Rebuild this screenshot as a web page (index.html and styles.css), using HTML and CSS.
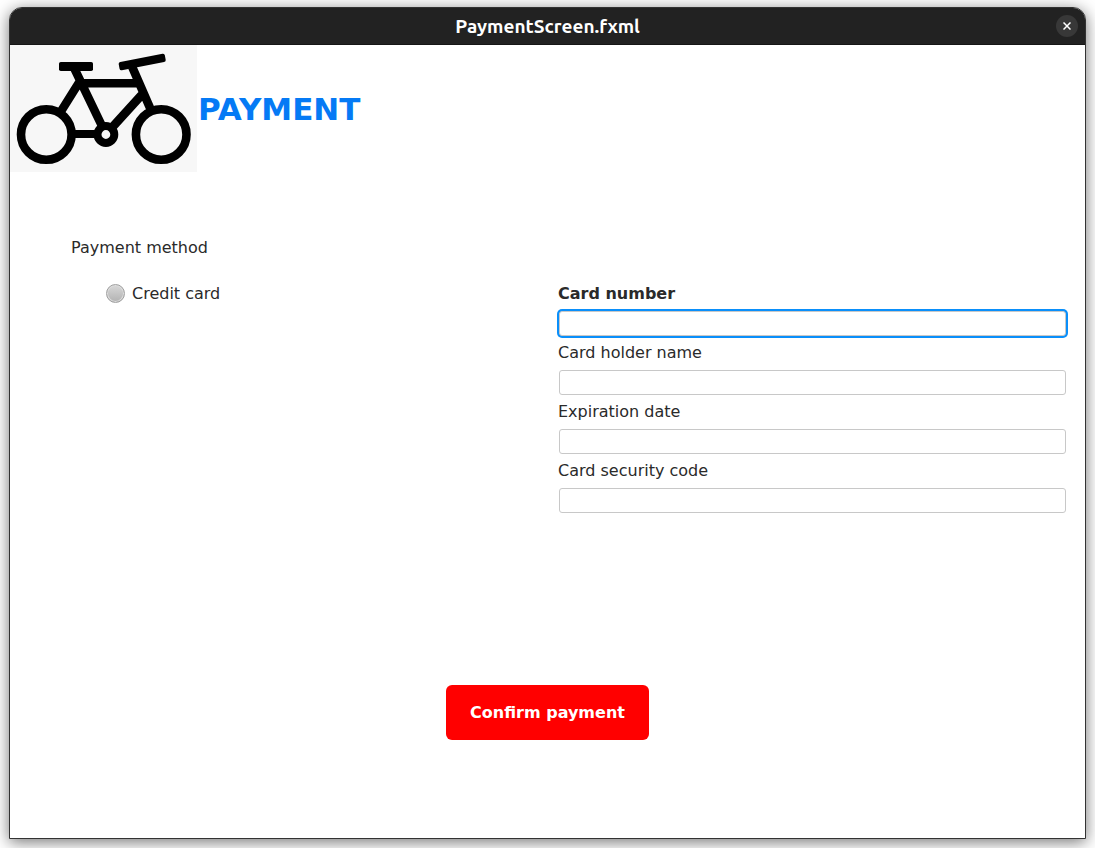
FILE: index.html
```html
<!DOCTYPE html>
<html lang="en">
<head>
  <meta charset="utf-8">
  <title>PaymentScreen.fxml</title>
  <link rel="stylesheet" href="styles.css">
</head>
<body>
  <div class="window">
    <header class="titlebar">
      <span class="titlebar-text">PaymentScreen.fxml</span>
      <button class="close" type="button" aria-label="Close">
        <svg width="8" height="8" viewBox="0 0 8 8" aria-hidden="true"><path d="M0.5 0.5 7.5 7.5M7.5 0.5 0.5 7.5" stroke="#fff" stroke-width="1.5" fill="none"/></svg>
      </button>
    </header>
    <main class="content">
      <div class="brand">
        <svg class="logo" viewBox="0 0 187 127" role="img" aria-label="Bicycle">
          <g fill="none" stroke="#000" stroke-width="8.6">
            <circle cx="36.3" cy="89.5" r="25.3"/>
            <circle cx="151.2" cy="89.5" r="25.3"/>
            <circle cx="95.9" cy="89.5" r="8.4" stroke-width="8"/>
            <path d="M65 89H86" stroke-width="8"/>
            <path d="M64.3 23.3 92.5 82M70 36 51.5 65.5M68 38.3H130M122.2 22 140.5 64M132.5 49 102.5 82"/>
          </g>
          <rect x="49" y="17" width="34" height="9" rx="1.8"/>
          <rect x="108.7" y="12.8" width="47" height="8.4" rx="2" transform="rotate(-11 132.2 17)"/>
        </svg>
        <h1 class="heading">PAYMENT</h1>
      </div>
      <form class="payment">
        <p class="section-title" id="method">Payment method</p>
        <div class="columns">
          <div class="methods" role="radiogroup" aria-labelledby="method">
            <label class="method"><input class="radio" type="radio" name="method" value="card">Credit card</label>
          </div>
          <div class="fields">
            <div class="field">
              <label class="label" for="number">Card number</label>
              <input class="input" id="number" type="text" autofocus>
            </div>
            <div class="field">
              <label class="label" for="holder">Card holder name</label>
              <input class="input" id="holder" type="text">
            </div>
            <div class="field">
              <label class="label" for="expiry">Expiration date</label>
              <input class="input" id="expiry" type="text">
            </div>
            <div class="field">
              <label class="label" for="code">Card security code</label>
              <input class="input" id="code" type="text">
            </div>
          </div>
        </div>
        <button class="confirm" type="button">Confirm payment</button>
      </form>
    </main>
  </div>
</body>
</html>
```
FILE: styles.css
```css
* {
  box-sizing: border-box;
}

body {
  margin: 0;
  min-height: 100vh;
  padding: 7px 9px 9px;
  display: flex;
  overflow: hidden;
  background: #fff;
  color: #2a2a2a;
  font: 16px/19px "DejaVu Sans", Verdana, sans-serif;
}

.window {
  flex: 1;
  display: flex;
  flex-direction: column;
  border: 1px solid #333;
  border-radius: 13px 13px 0 0;
  background: #fff;
  box-shadow: 0 3px 16px rgba(0, 0, 0, 0.55);
}

.titlebar {
  display: grid;
  grid-template-columns: 1fr auto 1fr;
  align-items: center;
  height: 37px;
  padding: 0 7px;
  border-bottom: 1px solid #161616;
  border-radius: 12px 12px 0 0;
  background: #222;
}

.titlebar-text {
  grid-column: 2;
  color: #fff;
  font: bold 19px/24px Ubuntu, "Noto Sans", sans-serif;
}

.close {
  justify-self: end;
  display: grid;
  place-items: center;
  width: 22px;
  height: 22px;
  padding: 0;
  border: 0;
  border-radius: 50%;
  background: #383838;
}

.content {
  flex: 1;
  display: flex;
  flex-direction: column;
}

.brand {
  display: flex;
  align-items: center;
}

.logo {
  width: 187px;
  height: 127px;
  background: #f7f7f7;
}

.heading {
  margin: 0;
  padding-left: 1px;
  color: #057af5;
  font-size: 31px;
  line-height: 36px;
}

.payment {
  display: flex;
  flex-direction: column;
  padding-top: 66px;
}

.section-title {
  margin: 0 61px 27px;
}

.columns {
  display: grid;
  grid-template-columns: 547fr 511fr;
  padding-right: 17px;
}

.methods {
  padding-left: 96px;
}

.method {
  display: inline-flex;
  align-items: center;
  gap: 7px;
}

.radio {
  appearance: none;
  width: 19px;
  height: 19px;
  margin: 0;
  border: 1px solid #a0a0a0;
  border-radius: 50%;
  background: linear-gradient(#d8d8d8, #b2b2b2);
  box-shadow: inset 0 0 0 1px #dedede;
}

.radio:checked {
  background: radial-gradient(#333 0 4px, #ccc 5px);
}

.fields {
  display: grid;
  gap: 7px;
}

.field {
  display: grid;
  gap: 8px;
}

.label {
  padding-left: 1px;
}

.field:focus-within .label {
  font-weight: bold;
}

.input {
  height: 25px;
  margin: 0 2px;
  padding: 2px 8px;
  border: 1px solid #c8c8c8;
  border-radius: 3px;
  background: #fff;
  color: inherit;
  font: inherit;
  outline: none;
  caret-color: transparent;
}

.input:focus {
  box-shadow: 0 0 0 2px #0a8ffa;
}

.confirm {
  align-self: center;
  margin: 172px 0 24px;
  padding: 18px 24px;
  border: 0;
  border-radius: 6px;
  background: #f00;
  color: #fff;
  font: bold 16px/19px "DejaVu Sans", Verdana, sans-serif;
}
```
